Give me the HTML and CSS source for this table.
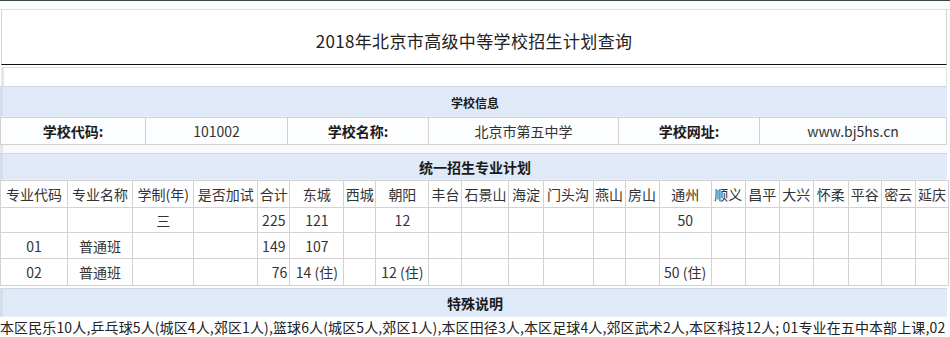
FILE: index.html
```html
<!DOCTYPE html>
<html lang="zh-CN">
<head>
<meta charset="utf-8">
<title>2018年北京市高级中等学校招生计划查询</title>
<link rel="stylesheet" href="styles.css">
</head>
<body>
<div class="page">
  <div class="topbar"></div>
  <div class="topgap"></div>
  <div class="title-box"><h1 class="title">2018年北京市高级中等学校招生计划查询</h1></div>
  <div class="spacer-row"></div>

  <div class="section-head head-info">学校信息</div>
  <table class="info">
    <colgroup>
      <col class="w145"><col class="w142"><col class="w141"><col class="w190"><col class="w141"><col class="w187">
    </colgroup>
    <tr>
      <td class="label">学校代码:</td>
      <td>101002</td>
      <td class="label">学校名称:</td>
      <td>北京市第五中学</td>
      <td class="label">学校网址:</td>
      <td>www.bj5hs.cn</td>
    </tr>
  </table>
  <div class="strip"></div>

  <div class="section-head head-plan">统一招生专业计划</div>
  <table class="plan">
    <colgroup>
      <col class="c67"><col class="c65"><col class="c61"><col class="c64"><col class="c32"><col class="c54"><col class="c32"><col class="c53"><col class="c33"><col class="c47"><col class="c34"><col class="c50"><col class="c32"><col class="c34"><col class="c52"><col class="c34"><col class="c34"><col class="c34"><col class="c35"><col class="c33"><col class="c34"><col class="c33">
    </colgroup>
    <tr class="hdr">
      <td>专业代码</td><td>专业名称</td><td>学制(年)</td><td>是否加试</td><td>合计</td><td>东城</td><td>西城</td><td>朝阳</td><td>丰台</td><td>石景山</td><td>海淀</td><td>门头沟</td><td>燕山</td><td>房山</td><td>通州</td><td>顺义</td><td>昌平</td><td>大兴</td><td>怀柔</td><td>平谷</td><td>密云</td><td>延庆</td>
    </tr>
    <tr class="r1">
      <td></td><td></td><td>三</td><td></td><td>225</td><td>121</td><td></td><td>12</td><td></td><td></td><td></td><td></td><td></td><td></td><td>50</td><td></td><td></td><td></td><td></td><td></td><td></td><td></td>
    </tr>
    <tr class="r2">
      <td>01</td><td>普通班</td><td></td><td></td><td>149</td><td>107</td><td></td><td></td><td></td><td></td><td></td><td></td><td></td><td></td><td></td><td></td><td></td><td></td><td></td><td></td><td></td><td></td>
    </tr>
    <tr class="r3">
      <td>02</td><td>普通班</td><td></td><td></td><td class="right">76</td><td>14 (住)</td><td></td><td>12 (住)</td><td></td><td></td><td></td><td></td><td></td><td></td><td>50 (住)</td><td></td><td></td><td></td><td></td><td></td><td></td><td></td>
    </tr>
  </table>

  <div class="section-head head-note">特殊说明</div>
  <div class="note">本区民乐10人,乒乓球5人(城区4人,郊区1人),篮球6人(城区5人,郊区1人),本区田径3人,本区足球4人,郊区武术2人,本区科技12人; 01专业在五中本部上课,02</div>
</div>
</body>
</html>
```

FILE: styles.css
```css
html, body {
  margin: 0;
  padding: 0;
  background: #ffffff;
}
body {
  font-family: "Noto Sans CJK SC", "Liberation Sans", sans-serif;
  color: #222222;
  width: 950px;
  height: 337px;
  overflow: hidden;
}
.page {
  width: 950px;
}
.topbar {
  height: 1px;
  background: #3a4744;
}
.topgap {
  height: 8px;
  background: #fbfcfc;
  border-bottom: 1px solid #dedede;
}
.title-box {
  height: 54px;
  margin: 0 3px 0 1px;
  border-left: 1px solid #d4d4d4;
  border-right: 1px solid #d4d4d4;
  border-bottom: 1px solid #111111;
  background: #ffffff;
  display: flex;
  align-items: center;
  justify-content: center;
}
.title {
  margin: 7px 0 0 0;
  font-size: 17px;
  letter-spacing: 0.35px;
  font-weight: normal;
  line-height: 20px;
  color: #222222;
}
.spacer-row {
  height: 18px;
  margin: 2px 3px 0 1px;
  border-top: 1px solid #e2e2e2;
  border-left: 3px solid #e6e6e6;
  border-right: 1px solid #e2e2e2;
  background: #ffffff;
}
.section-head {
  margin: 0 3px 0 0;
  background: #dfe9f8;
  border-top: 1px solid #cfd8e2;
  border-left: 3px solid #d4dde8;
  border-bottom: 1px solid #e9eff8;
  font-weight: bold;
  text-align: center;
  color: #1a1a1a;
  display: flex;
  align-items: center;
  justify-content: center;
}
.head-info {
  height: 28px;
  font-size: 12px;
  padding-top: 1px;
}
.head-plan {
  height: 25px;
  font-size: 14px;
  margin-top: 0;
}
.head-note {
  height: 27px;
  font-size: 14px;
  margin-top: 2px;
}
table {
  border-collapse: collapse;
  table-layout: fixed;
}
td {
  border: 1px solid #d2d2d2;
  padding: 0;
  text-align: center;
  white-space: nowrap;
  overflow: hidden;
}
.info {
  width: 946px;
  margin-left: 0;
  background: #fcfdfe;
}
.info td {
  height: 26px;
  font-size: 14px;
  line-height: 26px;
  color: #333333;
}
.info td.label {
  font-weight: bold;
  color: #1a1a1a;
}
.w145 { width: 145px; }
.w142 { width: 142px; }
.w141 { width: 141px; }
.w190 { width: 190px; }
.w187 { width: 187px; }
.strip {
  height: 8px;
  margin-right: 3px;
  background: #f8fafc;
  border-left: 3px solid #e4e8ee;
}
.plan {
  width: 949px;
  background: #ffffff;
}
.plan td {
  font-size: 14px;
  color: #333333;
  line-height: 18px;
}
.plan tr.hdr td { height: 26px; color: #333333; }
.plan tr.r1 td { height: 24px; }
.plan tr.r2 td { height: 25px; }
.plan tr.r3 td { height: 26px; }
.plan td.right { text-align: right; padding-right: 2px; }
.c67 { width: 67px; }
.c65 { width: 65px; }
.c61 { width: 61px; }
.c64 { width: 64px; }
.c32 { width: 32px; }
.c54 { width: 54px; }
.c53 { width: 53px; }
.c33 { width: 33px; }
.c47 { width: 47px; }
.c34 { width: 34px; }
.c50 { width: 50px; }
.c52 { width: 52px; }
.c35 { width: 35px; }
.note {
  font-size: 14px;
  line-height: 20px;
  letter-spacing: 0.12px;
  white-space: nowrap;
  overflow: hidden;
  color: #222222;
}
```
